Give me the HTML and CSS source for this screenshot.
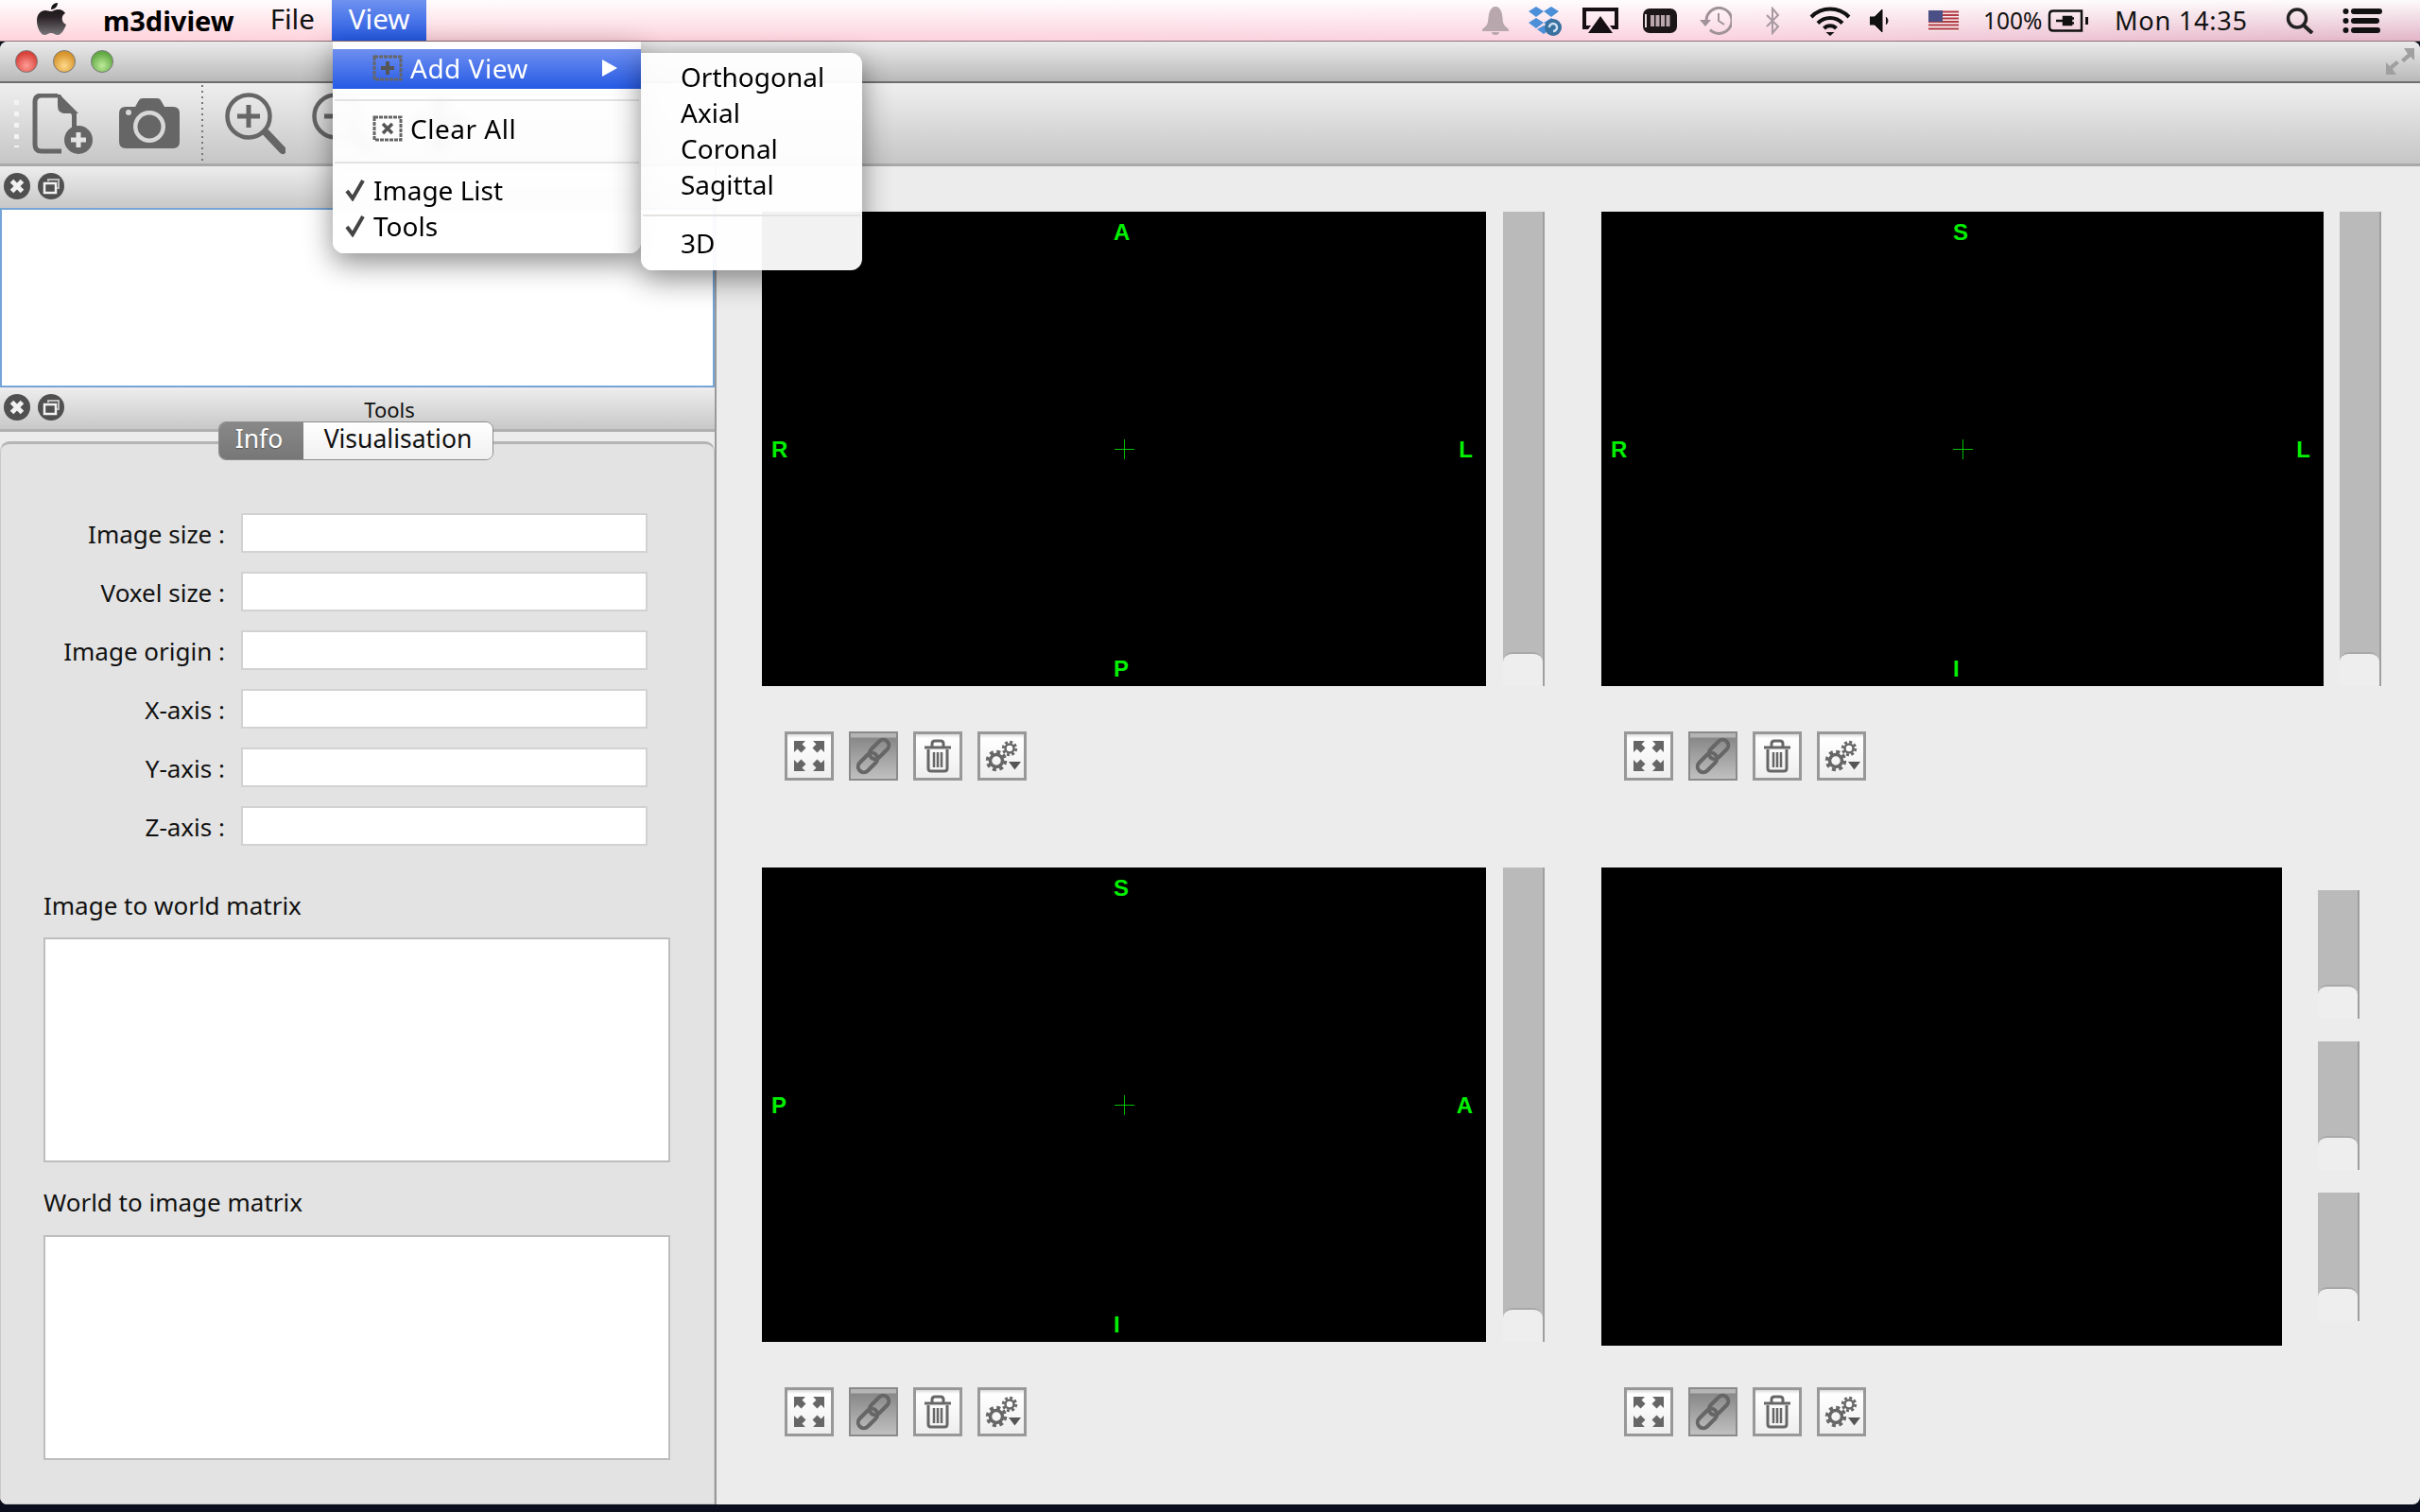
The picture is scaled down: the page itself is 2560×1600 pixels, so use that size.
FILE: index.html
```html
<!DOCTYPE html>
<html lang="en">
<head>
    <meta charset="UTF-8">
    <title>m3diview</title>
    <link rel="stylesheet" href="styles.css">
</head>
<body>

<svg class="sprite" width="0" height="0">
    <symbol id="i-expand" viewBox="3 3 46 46">
        <path d="M10 10h12l-3.500 3.500 4 4-5 5-4-4L10 22zM42 10v12l-3.500-3.500-4 4-5-5 4-4L30 10zM10 42V30l3.500 3.500 4-4 5 5-4 4L22 42zM42 42H30l3.500-3.500-4-4 5-5 4 4L42 30z" fill="#666"/>
    </symbol>
    <symbol id="i-link" viewBox="3 3 46 46">
        <g fill="none" stroke="#666" stroke-width="4">
            <rect x="26" y="7" width="12" height="24" rx="6" transform="rotate(45 32 19)"/>
            <rect x="14" y="21" width="12" height="24" rx="6" transform="rotate(45 20 33)"/>
        </g>
    </symbol>
    <symbol id="i-trash" viewBox="3 3 46 46">
        <path d="M12 17h28M20 16v-3q0-3 3-3h6q3 0 3 3v3" fill="none" stroke="#666" stroke-width="3"/>
        <path d="M16 19v20q0 3 3 3h14q3 0 3-3V19" fill="none" stroke="#666" stroke-width="3"/>
        <path d="M22 22v16M26 22v16M30 22v16" stroke="#666" stroke-width="2.500"/>
    </symbol>
    <symbol id="i-gears" viewBox="3 3 46 46">
        <g fill="none" stroke="#666">
            <circle cx="20" cy="31" r="6.500" stroke-width="3.500"/>
            <circle cx="20" cy="31" r="9.500" stroke-width="3.500" stroke-dasharray="4 3.460"/>
            <circle cx="34" cy="18" r="4.500" stroke-width="2.500"/>
            <circle cx="34" cy="18" r="6.800" stroke-width="2.800" stroke-dasharray="3 2.340"/>
        </g>
        <path d="M33 32h13l-6.500 8.500z" fill="#555"/>
    </symbol>
    <symbol id="i-close" viewBox="0 0 28 28">
        <circle cx="14" cy="14" r="14" fill="#505050"/>
        <path d="M8.500 8.500l11 11M19.500 8.500l-11 11" stroke="#f2f2f2" stroke-width="5"/>
    </symbol>
    <symbol id="i-float" viewBox="0 0 28 28">
        <circle cx="14" cy="14" r="14" fill="#505050"/>
        <path d="M11 9V7h11v9h-3" fill="none" stroke="#bbb" stroke-width="2"/>
        <rect x="7" y="11" width="12" height="10" fill="none" stroke="#f2f2f2" stroke-width="2.500"/>
    </symbol>
</svg>

<header class="menubar">
    <svg class="apple" width="32" height="36" viewBox="0 0 32 36">
        <defs>
            <linearGradient id="appleGrad" x1="0" y1="0" x2="0" y2="1">
                <stop offset="0" stop-color="#111"/>
                <stop offset=".45" stop-color="#2a2226"/>
                <stop offset="1" stop-color="#77757a"/>
            </linearGradient>
        </defs>
        <path d="M22 1c0 4-3 7-7 7 0-4 3-7 7-7zM15 10c2 0 4-2 8-2 3 0 6 2 7 4-5 3-4 10 1 12-2 5-5 11-9 11-3 0-4-2-7-2s-4 2-7 2C4 35 0 27 0 20 0 13 4 9 9 9c2 0 4 1 6 1z" fill="url(#appleGrad)"/>
    </svg>
    <span class="app-name">m3diview</span>
    <span class="menu-title file-title">File</span>
    <span class="menu-title view-title">View</span>

    <div class="status">
        <svg class="st st-bell" width="28" height="32" viewBox="0 0 28 32"><path d="M14 1c3 0 5 2 6 5 2 4 1 10 3 14 1 2 3 3 5 5v2H0v-2c2-2 4-3 5-5 2-4 1-10 3-14 1-3 3-5 6-5zM10 28h8q0 3-4 3t-4-3z" fill="#b8a7ad"/></svg>
        <svg class="st st-drop" width="36" height="32" viewBox="0 0 36 32"><path d="M9 1l8 5-8 6-8-6zM25 1l8 5-8 6-8-6zM9 13l8 5-8 6-8-6zM25 13l8 5-8 6-8-6zM17 21l7 4-7 5-7-5z" fill="#4b8fd8"/><circle cx="27" cy="23" r="9" fill="#39719f"/><path d="M23 23a4 4 0 1 1 4 4" fill="none" stroke="#cfe3f5" stroke-width="2.500"/></svg>
        <svg class="st st-air" width="38" height="28" viewBox="0 0 38 28"><path d="M0 0h38v23h-6l-3-4h5V4H4v15h5l-3 4H0z" fill="#161014"/><path d="M19 9l13 18H6z" fill="#161014"/></svg>
        <svg class="st st-mem" width="36" height="26" viewBox="0 0 36 26"><rect width="36" height="26" rx="7" fill="#1d1618"/><path d="M3 6v14" stroke="#eadde2" stroke-width="2"/><path d="M10 7v12M15.500 7v12M21 7v12M26.500 7v12" stroke="#b9a7ad" stroke-width="4"/></svg>
        <svg class="st st-time" width="34" height="30" viewBox="0 0 34 30"><path d="M7 15a13.500 13.500 0 1 1 4 9.500" fill="none" stroke="#a1929a" stroke-width="3"/><path d="M0 14h12l-6 7z" fill="#a1929a"/><path d="M20 7v8l6 4" fill="none" stroke="#a1929a" stroke-width="2"/></svg>
        <svg class="st st-blue" width="16" height="30" viewBox="0 0 16 30"><path d="M2 9l12 12-6 7V2l6 7L2 21" fill="none" stroke="#a79aa0" stroke-width="2"/></svg>
        <svg class="st st-wifi" width="44" height="32" viewBox="0 0 44 32"><path d="M2 12a28 28 0 0 1 40 0M9 18.500a18 18 0 0 1 26 0M15.500 24a9 9 0 0 1 13 0" fill="none" stroke="#111" stroke-width="4"/><path d="M22 32l-4.500-4h9z" fill="#111"/></svg>
        <svg class="st st-vol" width="22" height="24" viewBox="0 0 22 24"><path d="M0 8h5l8-8v24l-8-8H0zM17 8q4 4 0 8" fill="#111" stroke="#111" stroke-width="1"/></svg>
        <svg class="st st-flag" width="32" height="22" viewBox="0 0 32 22"><rect width="32" height="22" fill="#f6ecee"/><path d="M0 1.500h32M0 5h32M0 8.500h32M0 12h32M0 15.500h32M0 19.500h32" stroke="#b23a44" stroke-width="1.800"/><rect width="15" height="12" fill="#4a4f86"/></svg>
        <span class="st-text st-pct">100%</span>
        <svg class="st st-batt" width="44" height="24" viewBox="0 0 44 24"><path d="M6 1.500h30v21H6q-4 0-4-4v-13q0-4 4-4z" fill="none" stroke="#111" stroke-width="2.500"/><path d="M40 8h3v8h-3z" fill="#111"/><path d="M9 12h8M17 8h8v8h-8zM23 9.500h5M23 14.500h5" fill="#111" stroke="#111" stroke-width="2.500"/></svg>
        <span class="st-text st-clock">Mon 14:35</span>
        <svg class="st st-search" width="30" height="28" viewBox="0 0 30 28"><circle cx="12" cy="11.500" r="9.500" fill="none" stroke="#222" stroke-width="3.500"/><path d="M18 18l10 9" stroke="#222" stroke-width="4"/></svg>
        <svg class="st st-list" width="42" height="26" viewBox="0 0 42 26"><circle cx="3.500" cy="3" r="3" fill="#111"/><circle cx="3.500" cy="13" r="3" fill="#111"/><circle cx="3.500" cy="23" r="3" fill="#111"/><path d="M12 0h27q3 0 3 3t-3 3H12q-3 0-3-3t3-3zM12 10h24q3 0 3 3t-3 3H12q-3 0-3-3t3-3zM12 20h25q3 0 3 3t-3 3H12q-3 0-3-3t3-3z" fill="#111"/></svg>
    </div>
</header>

<div class="window">
    <div class="titlebar">
        <span class="light light-red"></span>
        <span class="light light-yellow"></span>
        <span class="light light-green"></span>
        <svg class="fullscreen" width="30" height="28" viewBox="0 0 30 28"><path d="M30 0v13l-4-4-7 6-3-3 7-6-4-6zM0 28V15l4 4 7-6 3 3-7 6 4 6z" fill="#a0a0a0"/></svg>
    </div>

    <div class="toolbar">
        <div class="grip"></div>
        <svg class="tool tool-file" width="64" height="64" viewBox="0 0 64 64">
            <path d="M27 2H10Q3 2 3 9v45q0 7 7 7h21" fill="none" stroke="#666" stroke-width="5"/>
            <path d="M27 1v12q0 8 8 8h12v15h-5V23L30 1z" fill="#666"/>
            <path d="M29 1l20 20H36q-7 0-7-7z" fill="#666"/>
            <circle cx="49" cy="49" r="15" fill="#666"/>
            <path d="M49 41v16M41 49h16" stroke="#e4e4e4" stroke-width="5"/>
        </svg>
        <svg class="tool tool-camera" width="64" height="54" viewBox="0 0 64 54">
            <path d="M7 9h10l4-7q1-2 4-2h15q3 0 4 2l4 7h9q7 0 7 7v30q0 7-7 7H7q-7 0-7-7V16q0-7 7-7z" fill="#666"/>
            <circle cx="32" cy="30" r="17" fill="#d8d8d8"/>
            <circle cx="32" cy="30" r="12.500" fill="#666"/>
            <circle cx="10" cy="15" r="3" fill="#d8d8d8"/>
        </svg>
        <div class="tool-sep"></div>
        <svg class="tool tool-zoom" width="64" height="66" viewBox="0 0 64 66">
            <circle cx="25" cy="25" r="22.500" fill="none" stroke="#666" stroke-width="4.500"/>
            <path d="M25 13v24M13 25h24" stroke="#666" stroke-width="5"/>
            <path d="M44 43l17 18" stroke="#666" stroke-width="8" stroke-linecap="round"/>
        </svg>
        <svg class="tool tool-zoom" width="64" height="66" viewBox="0 0 64 66">
            <circle cx="25" cy="25" r="22.500" fill="none" stroke="#666" stroke-width="4.500"/>
            <path d="M13 25h24" stroke="#666" stroke-width="5"/>
            <path d="M44 43l17 18" stroke="#666" stroke-width="8" stroke-linecap="round"/>
        </svg>
        <svg class="tool tool-pan" width="64" height="64" viewBox="0 0 64 64">
            <path d="M32 2l12 14H36v12h12v-8l14 12-14 12v-8H36v12h8L32 62 20 48h8V36H16v8L2 32l14-12v8h12V16h-8z" fill="#666"/>
        </svg>
    </div>

    <div class="content">
        <aside class="side">
            <div class="dock-title">
                <svg width="28" height="28"><use href="#i-close"/></svg>
                <svg width="28" height="28"><use href="#i-float"/></svg>
            </div>
            <div class="image-list"></div>
            <div class="dock-title dock-tools">
                <svg width="28" height="28"><use href="#i-close"/></svg>
                <svg width="28" height="28"><use href="#i-float"/></svg>
                <span class="dock-name">Tools</span>
            </div>
            <div class="tab-panel">
                <div class="tabs">
                    <span class="tab tab-on">Info</span>
                    <span class="tab">Visualisation</span>
                </div>
                <div class="info-form">
                    <div class="form-row"><label>Image size :</label><input type="text"></div>
                    <div class="form-row"><label>Voxel size :</label><input type="text"></div>
                    <div class="form-row"><label>Image origin :</label><input type="text"></div>
                    <div class="form-row"><label>X-axis :</label><input type="text"></div>
                    <div class="form-row"><label>Y-axis :</label><input type="text"></div>
                    <div class="form-row"><label>Z-axis :</label><input type="text"></div>
                </div>
                <div class="matrix-label first">Image to world matrix</div>
                <div class="matrix-box"></div>
                <div class="matrix-label">World to image matrix</div>
                <div class="matrix-box last"></div>
            </div>
        </aside>

        <main class="views">
            <section class="view">
                <div class="view-top">
                    <div class="canvas">
                        <span class="mark m-top">A</span><span class="mark m-left">R</span><span class="cross"></span><span class="mark m-right">L</span><span class="mark m-bottom">P</span>
                    </div>
                    <div class="slider"><div class="handle"></div></div>
                </div>
                <div class="view-btns">
                    <span class="vbtn"><svg width="46" height="46"><use href="#i-expand"/></svg></span>
                    <span class="vbtn vbtn-on"><svg width="46" height="46"><use href="#i-link"/></svg></span>
                    <span class="vbtn"><svg width="46" height="46"><use href="#i-trash"/></svg></span>
                    <span class="vbtn"><svg width="46" height="46"><use href="#i-gears"/></svg></span>
                </div>
            </section>

            <section class="view col2">
                <div class="view-top">
                    <div class="canvas">
                        <span class="mark m-top">S</span><span class="mark m-left">R</span><span class="cross"></span><span class="mark m-right">L</span><span class="mark m-bottom">I</span>
                    </div>
                    <div class="slider"><div class="handle"></div></div>
                </div>
                <div class="view-btns">
                    <span class="vbtn"><svg width="46" height="46"><use href="#i-expand"/></svg></span>
                    <span class="vbtn vbtn-on"><svg width="46" height="46"><use href="#i-link"/></svg></span>
                    <span class="vbtn"><svg width="46" height="46"><use href="#i-trash"/></svg></span>
                    <span class="vbtn"><svg width="46" height="46"><use href="#i-gears"/></svg></span>
                </div>
            </section>

            <section class="view">
                <div class="view-top">
                    <div class="canvas">
                        <span class="mark m-top">S</span><span class="mark m-left">P</span><span class="cross"></span><span class="mark m-right">A</span><span class="mark m-bottom">I</span>
                    </div>
                    <div class="slider"><div class="handle"></div></div>
                </div>
                <div class="view-btns">
                    <span class="vbtn"><svg width="46" height="46"><use href="#i-expand"/></svg></span>
                    <span class="vbtn vbtn-on"><svg width="46" height="46"><use href="#i-link"/></svg></span>
                    <span class="vbtn"><svg width="46" height="46"><use href="#i-trash"/></svg></span>
                    <span class="vbtn"><svg width="46" height="46"><use href="#i-gears"/></svg></span>
                </div>
            </section>

            <section class="view col2 view-3d">
                <div class="view-top">
                    <div class="canvas"></div>
                    <div class="slider-stack">
                        <div class="slider"><div class="handle"></div></div>
                        <div class="slider"><div class="handle"></div></div>
                        <div class="slider"><div class="handle"></div></div>
                    </div>
                </div>
                <div class="view-btns">
                    <span class="vbtn"><svg width="46" height="46"><use href="#i-expand"/></svg></span>
                    <span class="vbtn vbtn-on"><svg width="46" height="46"><use href="#i-link"/></svg></span>
                    <span class="vbtn"><svg width="46" height="46"><use href="#i-trash"/></svg></span>
                    <span class="vbtn"><svg width="46" height="46"><use href="#i-gears"/></svg></span>
                </div>
            </section>
        </main>
    </div>
</div>

<!-- open menus lie over the window -->
<div class="menu view-menu">
    <div class="menu-item item-on">
        <svg class="box-icon" width="32" height="28" viewBox="0 0 32 28"><rect x="2" y="2" width="28" height="24" fill="none" stroke="#666" stroke-width="3" stroke-dasharray="4 1"/><path d="M16 7v14M9 14h14" stroke="#555" stroke-width="4"/></svg>
        <span>Add View</span>
        <span class="arrow"></span>
    </div>
    <div class="menu-sep sep-a"></div>
    <div class="menu-item">
        <svg class="box-icon" width="32" height="28" viewBox="0 0 32 28"><rect x="2" y="2" width="28" height="24" fill="none" stroke="#666" stroke-width="3" stroke-dasharray="4 1"/><path d="M11 9l10 10M21 9L11 19" stroke="#555" stroke-width="3.500"/></svg>
        <span>Clear All</span>
    </div>
    <div class="menu-sep sep-b"></div>
    <div class="menu-item check-item">
        <svg class="check" width="21" height="24" viewBox="0 0 21 24"><path d="M2 13l6 8L19 2" fill="none" stroke="#444" stroke-width="4"/></svg>
        <span>Image List</span>
    </div>
    <div class="menu-item check-item">
        <svg class="check" width="21" height="24" viewBox="0 0 21 24"><path d="M2 13l6 8L19 2" fill="none" stroke="#444" stroke-width="4"/></svg>
        <span>Tools</span>
    </div>
</div>

<div class="menu sub-menu">
    <div class="menu-item">Orthogonal</div>
    <div class="menu-item">Axial</div>
    <div class="menu-item">Coronal</div>
    <div class="menu-item">Sagittal</div>
    <div class="menu-sep"></div>
    <div class="menu-item">3D</div>
</div>

</body>
</html>
```

FILE: styles.css
```css
* {
    box-sizing: border-box;
}

html, body {
    margin: 0;
    padding: 0;
}

body {
    position: relative;
    width: 2560px;
    height: 1600px;
    overflow: hidden;
    background-color: #0b0e1c;
    font-family: "Noto Sans", Arial, sans-serif;
    font-size: 27px;
    color: #111;
}

.sprite {
    position: absolute;
}

/* menu bar */
.menubar {
    display: flex;
    align-items: center;
    height: 44px;
    background:
        linear-gradient(rgba(255, 255, 255, 0.95), rgba(255, 255, 255, 0)),
        linear-gradient(90deg, #ffd3dc, #fbd2e0 70%, #e2b5c7);
    border-bottom: 1px solid #8f6f76;
}

.apple {
    margin: 0 0 3px 39px;
}

.app-name {
    margin-left: 38px;
    font-weight: 700;
    font-size: 29px;
    color: #000;
}

.menu-title {
    height: 43px;
    line-height: 40px;
    font-size: 29.5px;
}

.file-title {
    margin-left: 38px;
}

.view-title {
    flex: none;
    margin-left: 18px;
    padding: 0 18px;
    width: 100px;
    color: #fff;
    background: linear-gradient(#6f92ef, #2559e4);
}

.status {
    display: flex;
    align-items: center;
    margin-left: auto;
    height: 43px;
    padding-right: 40px;
}

.st {
    flex: none;
}

.st-bell { margin-right: 20px; }
.st-drop { margin-right: 22px; }
.st-air { margin-right: 26px; }
.st-mem { margin-right: 24px; }
.st-time { margin-right: 35px; }
.st-blue { margin-right: 31px; }
.st-wifi { margin-right: 20px; }
.st-vol { margin-right: 40px; }
.st-flag { margin-right: 26px; }
.st-batt { margin: 0 27px 0 8px; }
.st-search { margin: 0 30px 0 37px; }

.st-text {
    flex: none;
    white-space: nowrap;
}

.st-pct {
    width: 60px;
    font-size: 24.5px;
}

.st-clock {
    width: 144px;
    font-size: 27px;
    letter-spacing: 0.8px;
}

/* window */
.window {
    height: 1548px;
    background-color: #ececec;
    border-radius: 8px;
    overflow: hidden;
}

.titlebar {
    display: flex;
    align-items: center;
    gap: 16px;
    height: 44px;
    padding: 0 6px 0 16px;
    background: linear-gradient(#ebebeb, #b9b9b9);
    border-bottom: 2px solid #6e6e6e;
}

.light {
    width: 24px;
    height: 24px;
    border-radius: 50%;
    border: 1px solid #777;
}

.light-red { background: radial-gradient(circle at 50% 70%, #ff9d96, #d8423a 70%); }
.light-yellow { background: radial-gradient(circle at 50% 70%, #ffd98a, #d6932a 70%); }
.light-green { background: radial-gradient(circle at 50% 70%, #bdeb9a, #62a944 70%); }

.fullscreen {
    margin-left: auto;
}

.toolbar {
    display: flex;
    align-items: center;
    height: 88px;
    padding-left: 15px;
    background: linear-gradient(#efefef, #c6c6c6);
    border-bottom: 3px solid #a9a9a9;
}

.grip {
    width: 5px;
    height: 50px;
    background: repeating-linear-gradient(#f3f3f3 0 5px, transparent 5px 12px);
}

.tool {
    flex: none;
}

.tool-file { margin-left: 14px; }
.tool-camera { margin-left: 28px; }

.tool-sep {
    width: 2px;
    height: 82px;
    margin-left: 23px;
    background: repeating-linear-gradient(#777 0 2px, transparent 2px 6px);
}

.tool-zoom {
    margin-left: 23px;
}

.tool-zoom + .tool-zoom {
    margin-left: 28px;
}

.tool-pan {
    margin-left: 38px;
}

.content {
    display: flex;
    height: 1416px;
}

/* left docks */
.side {
    display: flex;
    flex-direction: column;
    flex: none;
    width: 758px;
    border-right: 2px solid #9a9a9a;
}

.dock-title {
    position: relative;
    display: flex;
    align-items: center;
    gap: 8px;
    flex: none;
    height: 44px;
    padding: 0 4px 2px;
    background: linear-gradient(#ededed, #c8c8c8);
}

.image-list {
    flex: none;
    height: 190px;
    background-color: #fff;
    border: 2px solid #75a4d6;
}

.dock-tools {
    height: 46px;
    margin-top: 1px;
    padding-bottom: 4px;
    border-bottom: 3px solid #b0b0b0;
}

.dock-name {
    position: absolute;
    top: 7px;
    left: 0;
    right: 0;
    margin-left: 68px;
    text-align: center;
    font-size: 22px;
    line-height: 30px;
}

.tab-panel {
    position: relative;
    flex: 1;
    margin-top: 10px;
    background-color: #e3e3e3;
    border: 1px solid #c9c9c9;
    border-top: 3px solid #b4b4b4;
    border-radius: 10px 10px 0 0;
}

.tabs {
    position: absolute;
    top: -24px;
    left: 230px;
    display: flex;
    height: 41px;
    border: 1px solid #8d8d8d;
    border-radius: 8px;
    overflow: hidden;
    font-size: 26.5px;
    line-height: 35px;
}

.tab {
    width: 200px;
    text-align: center;
    background: linear-gradient(#fff, #f0f0f0);
}

.tab-on {
    width: 89px;
    padding-right: 5px;
    color: #fff;
    background: linear-gradient(#888, #777);
    text-shadow: 0 1px 1px #555;
}

.info-form {
    display: flex;
    flex-direction: column;
    gap: 20px;
    padding-top: 73px;
}

.form-row {
    display: flex;
    align-items: center;
    gap: 17px;
}

.form-row label {
    width: 237px;
    padding-top: 2px;
    text-align: right;
    font-size: 26px;
}

.form-row input {
    width: 430px;
    height: 42px;
    margin: 0;
    padding: 0;
    background-color: #fff;
    border: 2px solid #d2d2d2;
    border-radius: 0;
    outline: none;
}

.matrix-label {
    height: 36px;
    margin: 23px 0 0 45px;
    font-size: 26px;
    line-height: 38px;
}

.matrix-label.first {
    margin-top: 44px;
}

.matrix-box {
    width: 663px;
    height: 238px;
    margin: 17px 0 0 45px;
    background-color: #fff;
    border: 2px solid #bdbdbd;
}

.matrix-box.last {
    height: 238px;
    margin-top: 18px;
}

/* views */
.views {
    display: grid;
    grid-template-columns: 828px 825px;
    grid-template-rows: 602px auto;
    column-gap: 60px;
    row-gap: 92px;
    padding: 48px 0 0 48px;
    flex: 1;
    align-content: start;
}

.view-top {
    display: flex;
    height: 502px;
}

.canvas {
    display: grid;
    grid-template-columns: 36px 1fr 36px;
    grid-template-rows: 42px 1fr 42px;
    place-items: center;
    width: 766px;
    flex: none;
    background-color: #000;
    color: #00f000;
    font-family: "Liberation Sans", Arial, sans-serif;
    font-weight: 700;
    font-size: 24px;
}

.mark {
    padding-top: 1px;
}

.m-top { grid-column: 2; grid-row: 1; justify-self: start; margin-left: 336px; }
.m-left { grid-column: 1; grid-row: 2; justify-self: start; margin-left: 10px; }
.cross { grid-column: 2; grid-row: 2; }
.m-right { grid-column: 3; grid-row: 2; justify-self: end; margin-right: 14px; }
.m-bottom { grid-column: 2; grid-row: 3; justify-self: start; margin: 4px 0 0 336px; }

.cross {
    width: 21px;
    height: 21px;
    background:
        linear-gradient(#00c000, #00c000) center / 21px 1px no-repeat,
        linear-gradient(#00c000, #00c000) center / 1px 21px no-repeat;
}

.slider {
    display: flex;
    flex-direction: column;
    justify-content: flex-end;
    flex: none;
    width: 44px;
    margin-left: 18px;
    background-color: #bababa;
    border-right: 2px solid #9f9f9f;
}

.handle {
    height: 36px;
    background-color: #eeeeee;
    border-top: 2px solid #a8a8a8;
    border-radius: 10px 10px 0 0;
}

.view-btns {
    display: flex;
    gap: 16px;
    margin: 48px 0 0 24px;
}

.vbtn {
    display: block;
    width: 52px;
    height: 52px;
    background: linear-gradient(#ddd 0, #fff 4px, #eee);
    border: 3px solid #989898;
}

.vbtn svg {
    display: block;
}

.vbtn-on {
    background: linear-gradient(#b5b5b5 0 4px, #888 5px, #c0c0c0);
    border-width: 2px;
    border-color: #8a8a8a;
    padding: 1px;
}

.col2 .canvas {
    width: 764px;
}

.col2 .slider {
    margin-left: 17px;
}

.view-3d .view-top {
    height: 506px;
}

.view-3d .canvas {
    width: 720px;
}

.view-3d .view-btns {
    margin-top: 44px;
}

.slider-stack {
    display: flex;
    flex-direction: column;
    gap: 24px;
    padding-top: 24px;
    margin-left: 38px;
}

.slider-stack .slider {
    height: 136px;
    margin-left: 0;
}

/* menus */
.menu {
    position: absolute;
    background-color: rgba(255, 255, 255, 0.95);
    border-radius: 0 0 12px 12px;
    box-shadow: 0 10px 30px rgba(0, 0, 0, 0.45);
    font-size: 28px;
    color: #000;
}

.view-menu {
    top: 44px;
    left: 352px;
    width: 326px;
    height: 224px;
    padding-top: 8px;
    backdrop-filter: blur(6px);
}

.sub-menu {
    top: 56px;
    left: 678px;
    width: 234px;
    height: 230px;
    padding-top: 7px;
    border-radius: 0 12px 12px 12px;
}

.menu-item {
    display: flex;
    align-items: center;
    height: 38px;
    padding-left: 42px;
    padding-bottom: 3px;
}

.view-menu .menu-item {
    height: 42px;
    padding-left: 42px;
}

.view-menu .check-item {
    height: 38px;
    padding-left: 13px;
}

.box-icon {
    margin-right: 8px;
}

.box-icon + span {
    letter-spacing: 0.5px;
}

.check {
    margin-right: 9px;
}

.item-on {
    position: relative;
    color: #fff;
    background: linear-gradient(#6e8ff0, #265ae5);
}

.arrow {
    position: absolute;
    left: 285px;
    top: 11px;
    border-left: 16px solid #fff;
    border-top: 9px solid transparent;
    border-bottom: 9px solid transparent;
}

.menu-sep {
    height: 2px;
    margin: 12px 2px 10px;
    background-color: #e3e3e3;
}

.sep-a {
    margin: 11px 2px 9px;
}

.sep-b {
    margin: 13px 2px 10px;
}
```
